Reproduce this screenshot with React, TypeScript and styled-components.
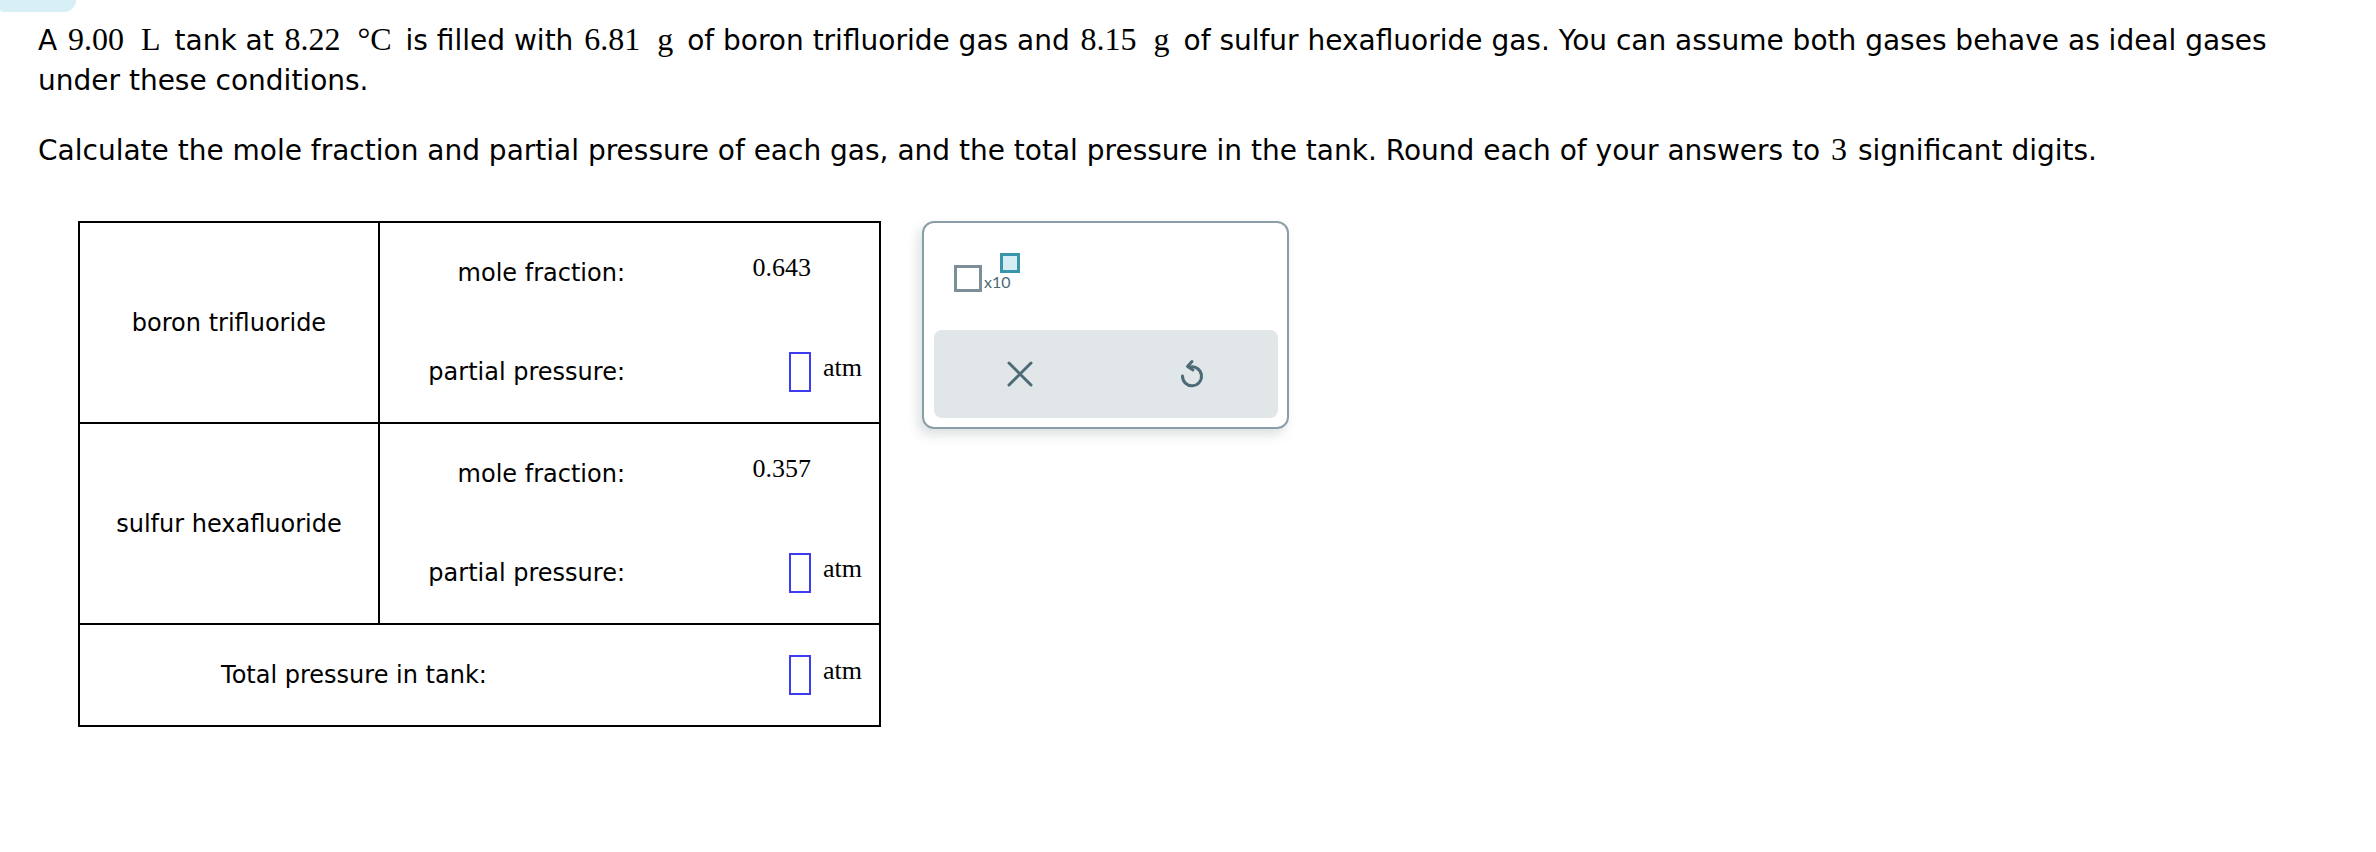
import React from 'react'
import styled, { createGlobalStyle } from 'styled-components'

const GlobalStyle = createGlobalStyle`
  html, body {
    margin: 0;
    padding: 0;
    background: #fff;
  }
  body {
    font-family: "DejaVu Sans", Verdana, sans-serif;
    color: #000;
  }
`

const Page = styled.div`
  width: 2376px;
  height: 852px;
  padding: 0 60px 0 38px;
  box-sizing: border-box;
  overflow: hidden;
`

const Tab = styled.div`
  width: 76px;
  height: 12px;
  margin-left: -38px;
  background: #d8eff5;
  border-bottom-right-radius: 14px;
  border-bottom-left-radius: 4px;
`

const Para = styled.p<{ $top: number }>`
  margin: ${p => p.$top}px 0 0;
  font-size: 28px;
  line-height: 40px;
`

const Num = styled.span`
  margin: 0 2px;
  font-family: "Liberation Serif", "Times New Roman", serif;
  font-size: 32px;
  line-height: 1;
`

const Unit = styled(Num)`
  margin: 0 5px 0 15px;
`

const Work = styled.div`
  display: flex;
  align-items: flex-start;
  gap: 41px;
  margin: 50px 0 0 40px;
`

const Table = styled.div`
  width: 803px;
  border: 2px solid #000;
  box-sizing: border-box;
  font-size: 24px;
`

const GasRow = styled.div`
  display: grid;
  grid-template-columns: 300px 1fr;
  border-bottom: 2px solid #000;
`

const NameCell = styled.div`
  display: flex;
  align-items: center;
  justify-content: center;
  border-right: 2px solid #000;
  box-sizing: border-box;
`

const SubRow = styled.div<{ $label: number; $value: number }>`
  display: grid;
  grid-template-columns: ${p => p.$label}px ${p => p.$value}px 1fr;
  align-items: center;
  height: 99.5px;
`

const Label = styled.div<{ $center?: boolean }>`
  text-align: ${p => (p.$center ? 'center' : 'right')};
`

const Value = styled.div`
  display: flex;
  justify-content: flex-end;
  font-family: "Liberation Serif", "Times New Roman", serif;
  font-size: 26px;
`

const Fraction = styled.span`
  padding-bottom: 10px;
`

const UnitCell = styled.div`
  padding: 0 0 8px 12px;
  font-family: "Liberation Serif", "Times New Roman", serif;
  font-size: 26px;
`

const Blank = styled.div`
  width: 22px;
  height: 40px;
  border: 2px solid #3c3cf2;
  box-sizing: border-box;
`

const Panel = styled.div`
  width: 367px;
  height: 208px;
  border: 2px solid #8a9ea7;
  border-radius: 12px;
  box-sizing: border-box;
  box-shadow: -4px 6px 12px rgba(40, 60, 70, 0.16);
  padding: 30px 9px 9px 10px;
  display: flex;
  flex-direction: column;
`

const Template = styled.div`
  display: inline-flex;
  height: 39px;
  margin-left: 20px;
`

const BaseBox = styled.div`
  align-self: flex-end;
  width: 28px;
  height: 27px;
  border: 3px solid #7b8f99;
  box-sizing: border-box;
`

const Times = styled.span`
  align-self: flex-end;
  margin: 0 0 2px 2px;
  font-family: Lato, "Open Sans", sans-serif;
  font-size: 16px;
  line-height: 1;
  color: #4b6a77;
`

const SupBox = styled.div`
  align-self: flex-start;
  width: 20px;
  height: 20px;
  margin-left: -11px;
  border: 3px solid #3a95ab;
  background: #d5eef4;
  box-sizing: border-box;
`

const Bar = styled.div`
  margin-top: auto;
  height: 88px;
  display: flex;
  background: #e1e6e9;
  border-radius: 8px;
`

const Tool = styled.div`
  flex: 1;
  display: flex;
  align-items: center;
  justify-content: center;
`

const CloseIcon = () => (
  <svg width="26" height="26" viewBox="0 0 26 26" fill="none" stroke="#4d6b77" strokeWidth="3" strokeLinecap="round">
    <path d="M2 2 24 24M24 2 2 24" />
  </svg>
)

const UndoIcon = () => (
  <svg width="28" height="30" viewBox="0 0 28 30" fill="none" stroke="#4d6b77" strokeWidth="3" strokeLinecap="round" strokeLinejoin="round">
    <path d="M4.5 17A9.5 9.5 0 1 0 12 8" />
    <path d="M14 2.5 9.5 7.5 15 11" />
  </svg>
)

type Gas = { name: string; fraction: string }

const gases: Gas[] = [
  { name: 'boron trifluoride', fraction: '0.643' },
  { name: 'sulfur hexafluoride', fraction: '0.357' },
]

export default function App() {
  return (
    <Page>
      <GlobalStyle />
      <Tab />
      <Para $top={9}>
        A <Num>9.00</Num><Unit>L</Unit> tank at <Num>8.22</Num><Unit>°C</Unit> is filled with <Num>6.81</Num>
        <Unit>g</Unit> of boron trifluoride gas and <Num>8.15</Num><Unit>g</Unit> of sulfur hexafluoride gas. You
        can assume both gases behave as ideal gases under these conditions.
      </Para>
      <Para $top={30}>
        Calculate the mole fraction and partial pressure of each gas, and the total pressure in the tank. Round each
        of your answers to <Num>3</Num> significant digits.
      </Para>
      <Work>
        <Table>
          {gases.map(g => (
            <GasRow key={g.name}>
              <NameCell>{g.name}</NameCell>
              <div>
                <SubRow $label={245} $value={186}>
                  <Label>mole fraction:</Label>
                  <Value>
                    <Fraction>{g.fraction}</Fraction>
                  </Value>
                  <UnitCell />
                </SubRow>
                <SubRow $label={245} $value={186}>
                  <Label>partial pressure:</Label>
                  <Value>
                    <Blank />
                  </Value>
                  <UnitCell>atm</UnitCell>
                </SubRow>
              </div>
            </GasRow>
          ))}
          <SubRow $label={548} $value={183}>
            <Label $center>Total pressure in tank:</Label>
            <Value>
              <Blank />
            </Value>
            <UnitCell>atm</UnitCell>
          </SubRow>
        </Table>
        <Panel>
          <Template>
            <BaseBox />
            <Times>x10</Times>
            <SupBox />
          </Template>
          <Bar>
            <Tool>
              <CloseIcon />
            </Tool>
            <Tool>
              <UndoIcon />
            </Tool>
          </Bar>
        </Panel>
      </Work>
    </Page>
  )
}
